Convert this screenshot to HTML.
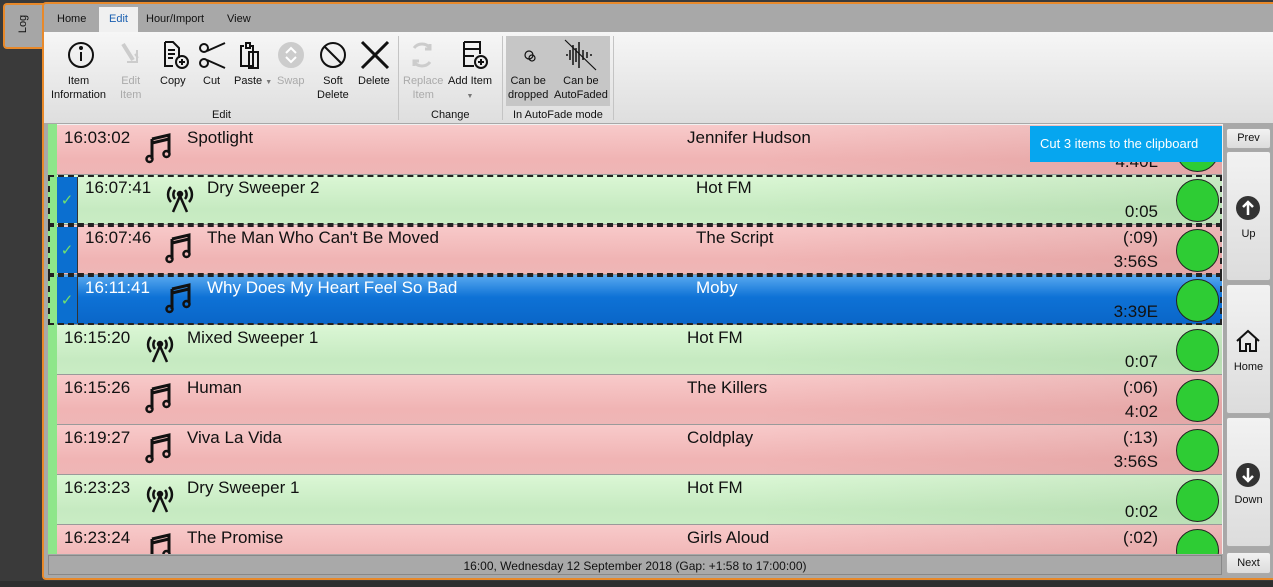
<!DOCTYPE html>
<html><head><meta charset="utf-8"><style>
*{margin:0;padding:0;box-sizing:border-box}
body{width:1273px;height:587px;overflow:hidden;background:#3a3a3a;font-family:"Liberation Sans",sans-serif;position:relative}
.a{position:absolute}
.tab{font-size:11px;color:#111;top:13px}
.rb{font-size:11px;color:#111;text-align:center;line-height:14px}
.dis{color:#aaa}
.row{position:absolute;left:57px;width:1165px;height:50px;border-bottom:1px solid #9a9a9a}
.red{background:linear-gradient(to right,rgba(0,0,0,0) 60%,rgba(150,60,60,.12)),linear-gradient(#f8caca,#f0b4b4 70%,#eeb6b6)}
.grn{background:linear-gradient(to right,rgba(0,0,0,0) 60%,rgba(60,120,60,.1)),linear-gradient(#dbf7d5,#c6eac1 70%,#c9ecc4)}
.blu{background:linear-gradient(#5aaaf0,#0e72d6 45%,#0a66c8)}
.t{position:absolute;font-size:17px;color:#111;white-space:nowrap}
.w{color:#fff}
.circ{position:absolute;width:43px;height:43px;border-radius:50%;background:#2ecc34;border:1px solid #222;left:1176px}
.sel{position:absolute;left:48px;width:1174px;height:50px;border:2px dashed #222}
.chk{position:absolute;left:57px;width:20px;height:46px;background:#0b6fd0;color:#6fe06f;font-size:15px;text-align:center;padding-top:14px}
.btn{position:absolute;left:1226px;width:45px;background:linear-gradient(#f2f2f2,#dcdcdc);border:1px solid #aaa;border-radius:3px;font-size:11px;text-align:center;color:#111}
.dur{position:absolute;font-size:17px;text-align:right;width:100px;left:1058px;color:#111}
</style></head><body>
<!-- Log tab -->
<div class="a" style="left:3px;top:3px;width:42px;height:46px;background:#a6a6a6;border:2px solid #e8892a;border-right:none;border-radius:4px 0 0 4px"></div>
<div class="a" style="left:13px;top:15px;font-size:11px;transform:rotate(-90deg);transform-origin:center;color:#111;left:14px;top:18px">Log</div>
<!-- main panel -->
<div class="a" style="left:42px;top:2px;width:1231px;height:578px;background:#a8a8a8;border:2px solid #e8892a;border-right:none;border-radius:4px 0 0 4px"></div>
<div class="a" style="left:0;top:581px;width:1273px;height:6px;background:#2e2e2e"></div>
<!-- tabs -->
<div class="a" style="left:99px;top:7px;width:39px;height:26px;background:#f0f0f0"></div>
<div class="a tab" style="left:57px">Home</div>
<div class="a tab" style="left:109px;color:#1a5fb0">Edit</div>
<div class="a tab" style="left:146px">Hour/Import</div>
<div class="a tab" style="left:227px">View</div>
<!-- ribbon -->
<div class="a" style="left:44px;top:32px;width:1229px;height:91px;background:linear-gradient(#f6f6f6,#dedede)"></div>
<div class="a" style="left:506px;top:36px;width:104px;height:70px;background:#c6c6c6"></div>
<div class="a" style="left:398px;top:36px;width:1px;height:84px;background:#c4c4c4"></div>
<div class="a" style="left:502px;top:36px;width:1px;height:84px;background:#c4c4c4"></div>
<div class="a" style="left:613px;top:36px;width:1px;height:84px;background:#c4c4c4"></div>
<svg class="a" style="left:44px;top:32px" width="570" height="40" viewBox="44 32 570 40" fill="none" stroke="#111" stroke-width="2">
<circle cx="81" cy="55" r="12"/><line x1="81" y1="52" x2="81" y2="61"/><circle cx="81" cy="48" r="1" fill="#111"/>
<g stroke="#ccc" stroke-width="4"><line x1="123" y1="44" x2="133" y2="60"/></g><path d="M127 62h10v-12M135 54l3 4" stroke="#ccc"/>
<path d="M165 42h8l6 6v10M165 42v24h8M168 50h7M168 54h7M168 58h5" /><circle cx="182" cy="62" r="6"/><path d="M182 59v6M179 62h6"/>
<circle cx="204" cy="48" r="4"/><circle cx="204" cy="63" r="4"/><path d="M207 51l18 -8M207 60l18 8"/>
<path d="M244 46h-3v20h12v-20h-3M246 43h4v5h-4zM249 52h9v16h-9z"/>
<circle cx="291" cy="55" r="12" stroke="#ccc" fill="#ccc"/><path d="M286 53l5-5 5 5M286 57l5 5 5-5" stroke="#fff"/>
<circle cx="333" cy="55" r="12"/><line x1="324" y1="46" x2="342" y2="64"/>
<path d="M362 42l26 26M388 42l-26 26" stroke-width="3"/>
<path d="M414 48a10 10 0 0 1 16 0M430 62a10 10 0 0 1 -16 0M430 44v5h-5M414 66v-5h5" stroke="#ccc" stroke-width="3"/>
<path d="M464 42h16v12M464 42v24h10M464 49h16M464 56h10"/><circle cx="481" cy="62" r="6"/><path d="M481 59v6M478 62h6"/>
<circle cx="529" cy="55" r="4" stroke-width="1.2"/><circle cx="532" cy="58" r="3" stroke-width="1.2"/>
<path d="M566 55h2M570 50v10M573 45v20M576 48v14M579 42v26M583 50v10M587 52v6M591 54v2" stroke-width="1.5"/><line x1="565" y1="40" x2="596" y2="70" stroke-width="1.2"/>
</svg>
<div class="a rb" style="left:51px;top:74px">Item<br>Information</div>
<div class="a rb dis" style="left:120px;top:74px">Edit<br>Item</div>
<div class="a rb" style="left:160px;top:74px">Copy</div>
<div class="a rb" style="left:203px;top:74px">Cut</div>
<div class="a rb" style="left:234px;top:74px">Paste <span style="font-size:7px;color:#777">▼</span></div>
<div class="a rb dis" style="left:277px;top:74px">Swap</div>
<div class="a rb" style="left:317px;top:74px">Soft<br>Delete</div>
<div class="a rb" style="left:358px;top:74px">Delete</div>
<div class="a rb dis" style="left:403px;top:74px">Replace<br>Item</div>
<div class="a rb" style="left:448px;top:74px">Add Item<br><span style="font-size:7px;color:#777">▼</span></div>
<div class="a rb" style="left:508px;top:74px">Can be<br>dropped</div>
<div class="a rb" style="left:554px;top:74px">Can be<br>AutoFaded</div>
<div class="a rb" style="left:212px;top:108px">Edit</div>
<div class="a rb" style="left:431px;top:108px">Change</div>
<div class="a rb" style="left:513px;top:108px">In AutoFade mode</div>
<!-- list -->
<div class="a" style="left:48px;top:124px;width:1175px;height:430px;background:#f0f0f0;overflow:hidden">
</div>
<div class="a" style="left:48px;top:124px;width:9px;height:430px;background:#8ee68a"></div>
<svg width="0" height="0" style="position:absolute"><defs>
<g id="note"><path d="M7 7l17-4v18" stroke="#111" stroke-width="3" fill="none"/><path d="M7 7v20" stroke="#111" stroke-width="3"/><path d="M7 11l17-4" stroke="#111" stroke-width="3"/><circle cx="4.5" cy="27" r="3" fill="none" stroke="#111" stroke-width="2.5"/><circle cx="21.5" cy="22" r="3" fill="none" stroke="#111" stroke-width="2.5"/></g>
<g id="ant" fill="none" stroke="#111" stroke-width="2.5"><path d="M15 14l-7 16M15 14l7 16"/><circle cx="15" cy="12" r="2" fill="#111"/><path d="M10 8a7 7 0 0 0 0 9M20 8a7 7 0 0 1 0 9M6 5a11 11 0 0 0 0 15M24 5a11 11 0 0 1 0 15"/></g>
</defs></svg>
<div class="a" style="left:48px;top:124px;width:1175px;height:430px;overflow:hidden">
<div style="position:relative;left:-48px;top:-124px">
<!-- row1 -->
<div class="row red" style="top:125px"></div>
<div class="t" style="left:64px;top:128px">16:03:02</div>
<svg class="a" style="left:145px;top:132px" width="32" height="32"><use href="#note"/></svg>
<div class="t" style="left:187px;top:128px">Spotlight</div>
<div class="t" style="left:687px;top:128px">Jennifer Hudson</div>
<div class="dur" style="top:152px">4:40L</div>
<div class="circ" style="top:129px"></div>
<!-- row2 -->
<div class="row grn" style="top:175px"></div>
<div class="t" style="left:85px;top:178px">16:07:41</div>
<svg class="a" style="left:165px;top:182px" width="32" height="32"><use href="#ant"/></svg>
<div class="t" style="left:207px;top:178px">Dry Sweeper 2</div>
<div class="t" style="left:696px;top:178px">Hot FM</div>
<div class="dur" style="top:202px">0:05</div>
<div class="circ" style="top:179px"></div>
<!-- row3 -->
<div class="row red" style="top:225px"></div>
<div class="t" style="left:85px;top:228px">16:07:46</div>
<svg class="a" style="left:165px;top:232px" width="32" height="32"><use href="#note"/></svg>
<div class="t" style="left:207px;top:228px">The Man Who Can't Be Moved</div>
<div class="t" style="left:696px;top:228px">The Script</div>
<div class="dur" style="top:228px">(:09)</div>
<div class="dur" style="top:252px">3:56S</div>
<div class="circ" style="top:229px"></div>
<!-- row4 -->
<div class="row blu" style="top:275px"></div>
<div class="t w" style="left:85px;top:278px">16:11:41</div>
<svg class="a" style="left:165px;top:282px" width="32" height="32"><use href="#note"/></svg>
<div class="t w" style="left:207px;top:278px">Why Does My Heart Feel So Bad</div>
<div class="t w" style="left:696px;top:278px">Moby</div>
<div class="dur w" style="top:302px">3:39E</div>
<div class="circ" style="top:279px"></div>
<!-- row5 -->
<div class="row grn" style="top:325px"></div>
<div class="t" style="left:64px;top:328px">16:15:20</div>
<svg class="a" style="left:145px;top:332px" width="32" height="32"><use href="#ant"/></svg>
<div class="t" style="left:187px;top:328px">Mixed Sweeper 1</div>
<div class="t" style="left:687px;top:328px">Hot FM</div>
<div class="dur" style="top:352px">0:07</div>
<div class="circ" style="top:329px"></div>
<!-- row6 -->
<div class="row red" style="top:375px"></div>
<div class="t" style="left:64px;top:378px">16:15:26</div>
<svg class="a" style="left:145px;top:382px" width="32" height="32"><use href="#note"/></svg>
<div class="t" style="left:187px;top:378px">Human</div>
<div class="t" style="left:687px;top:378px">The Killers</div>
<div class="dur" style="top:378px">(:06)</div>
<div class="dur" style="top:402px">4:02</div>
<div class="circ" style="top:379px"></div>
<!-- row7 -->
<div class="row red" style="top:425px"></div>
<div class="t" style="left:64px;top:428px">16:19:27</div>
<svg class="a" style="left:145px;top:432px" width="32" height="32"><use href="#note"/></svg>
<div class="t" style="left:187px;top:428px">Viva La Vida</div>
<div class="t" style="left:687px;top:428px">Coldplay</div>
<div class="dur" style="top:428px">(:13)</div>
<div class="dur" style="top:452px">3:56S</div>
<div class="circ" style="top:429px"></div>
<!-- row8 -->
<div class="row grn" style="top:475px"></div>
<div class="t" style="left:64px;top:478px">16:23:23</div>
<svg class="a" style="left:145px;top:482px" width="32" height="32"><use href="#ant"/></svg>
<div class="t" style="left:187px;top:478px">Dry Sweeper 1</div>
<div class="t" style="left:687px;top:478px">Hot FM</div>
<div class="dur" style="top:502px">0:02</div>
<div class="circ" style="top:479px"></div>
<!-- row9 -->
<div class="row red" style="top:525px"></div>
<div class="t" style="left:64px;top:528px">16:23:24</div>
<svg class="a" style="left:145px;top:532px" width="32" height="32"><use href="#note"/></svg>
<div class="t" style="left:187px;top:528px">The Promise</div>
<div class="t" style="left:687px;top:528px">Girls Aloud</div>
<div class="dur" style="top:528px">(:02)</div>
<div class="circ" style="top:529px"></div>
<!-- selection -->
<div class="chk" style="top:177px">✓</div>
<div class="chk" style="top:227px">✓</div>
<div class="chk" style="top:277px">✓</div>
<div class="a" style="left:77px;top:177px;width:1px;height:146px;background:#333"></div>
<div class="sel" style="top:175px"></div>
<div class="sel" style="top:225px"></div>
<div class="sel" style="top:275px"></div>
</div></div>
<!-- toast -->
<div class="a" style="left:1030px;top:126px;width:192px;height:36px;background:#06a6ef;color:#fff;font-size:13px;padding:10px 0 0 10px">Cut 3 items to the clipboard</div>
<!-- status -->
<div class="a" style="left:48px;top:555px;width:1174px;height:20px;background:#a9a9a9;border:1px solid #888;font-size:12px;text-align:center;padding-top:3px;color:#111">16:00, Wednesday 12 September 2018 (Gap: +1:58 to 17:00:00)</div>
<!-- side buttons -->
<div class="btn" style="top:128px;height:21px;padding-top:3px">Prev</div>
<div class="btn" style="top:151px;height:130px;padding-top:76px">Up</div>
<div class="btn" style="top:284px;height:130px;padding-top:76px">Home</div>
<div class="btn" style="top:417px;height:130px;padding-top:76px">Down</div>
<div class="btn" style="top:552px;height:22px;padding-top:4px">Next</div>
<svg class="a" style="left:1235px;top:195px" width="26" height="26"><circle cx="13" cy="13" r="12" fill="#333"/><path d="M13 20V7M8 12l5-5 5 5" stroke="#fff" stroke-width="2.5" fill="none"/></svg>
<svg class="a" style="left:1235px;top:328px" width="26" height="26" fill="none" stroke="#111" stroke-width="2"><path d="M2 13L13 3l11 10M5 11v12h6v-7h4v7h6V11"/></svg>
<svg class="a" style="left:1235px;top:462px" width="26" height="26"><circle cx="13" cy="13" r="12" fill="#333"/><path d="M13 6v13M8 14l5 5 5-5" stroke="#fff" stroke-width="2.5" fill="none"/></svg>
</body></html>
